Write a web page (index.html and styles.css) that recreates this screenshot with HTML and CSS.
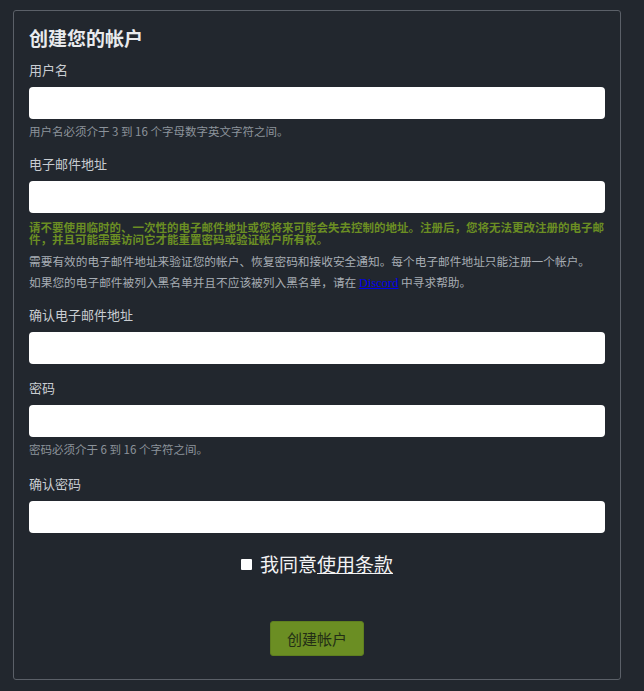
FILE: index.html
```html
<!DOCTYPE html>
<html lang="zh">
<head>
<meta charset="utf-8">
<title>创建您的帐户</title>
<link rel="stylesheet" href="styles.css">
</head>
<body>
<div class="card">
  <h1 class="title">创建您的帐户</h1>

  <div class="field f1">
    <label class="label">用户名</label>
    <input class="input" type="text">
    <p class="hint">用户名必须介于 3 到 16 个字母数字英文字符之间。</p>
  </div>

  <div class="field f2">
    <label class="label">电子邮件地址</label>
    <input class="input" type="email">
    <p class="warn">请不要使用临时的、一次性的电子邮件地址或您将来可能会失去控制的地址。注册后，您将无法更改注册的电子邮件，并且可能需要访问它才能重置密码或验证帐户所有权。</p>
    <p class="note n1">需要有效的电子邮件地址来验证您的帐户、恢复密码和接收安全通知。每个电子邮件地址只能注册一个帐户。</p>
    <p class="note n2">如果您的电子邮件被列入黑名单并且不应该被列入黑名单，请在 <a class="link" href="#">Discord</a> 中寻求帮助。</p>
  </div>

  <div class="field f3">
    <label class="label">确认电子邮件地址</label>
    <input class="input" type="email">
  </div>

  <div class="field f4">
    <label class="label">密码</label>
    <input class="input" type="password">
    <p class="hint">密码必须介于 6 到 16 个字符之间。</p>
  </div>

  <div class="field f5">
    <label class="label">确认密码</label>
    <input class="input" type="password">
  </div>

  <div class="agree">
    <span class="box"></span>
    <span class="agree-text">我同意<a class="terms" href="#">使用条款</a></span>
  </div>

  <div class="actions">
    <button class="btn" type="button">创建帐户</button>
  </div>
</div>
</body>
</html>
```

FILE: styles.css
```css
html, body {
  margin: 0;
  padding: 0;
  background: #22272e;
}
body {
  padding: 10px 0 0 13px;
  font-family: "Noto Sans CJK SC", "Noto Sans", sans-serif;
  color: #c9cdd2;
}
.card {
  box-sizing: border-box;
  width: 608px;
  border: 1px solid #5b6068;
  border-radius: 3px;
  padding: 14px 15px 23px 15px;
  background: #22272e;
}
.title {
  margin: 0;
  font-size: 19px;
  line-height: 25px;
  font-weight: 700;
  color: #e8eaed;
}
.field {
  display: flex;
  flex-direction: column;
}
.f1 { margin-top: 11px; }
.f2 { margin-top: 16px; }
.f3 { margin-top: 15px; }
.f4 { margin-top: 15px; }
.f5 { margin-top: 18px; }
.label {
  font-size: 13px;
  line-height: 18px;
  color: #c9cdd2;
  margin-bottom: 8px;
}
.input {
  box-sizing: border-box;
  height: 32px;
  width: 100%;
  margin: 0;
  border: none;
  border-radius: 4px;
  background: #ffffff;
}
.hint {
  margin: 4px 0 0 0;
  font-size: 11.5px;
  line-height: 16px;
  color: #8c939b;
}
.warn {
  margin: 8px 0 0 0;
  font-size: 11.5px;
  line-height: 12px;
  font-weight: 700;
  color: #6b8e23;
}
.note {
  margin: 0;
  font-size: 11.7px;
  line-height: 16px;
  color: #a7adb4;
}
.n1 { margin-top: 8px; }
.n2 { margin-top: 5px; }
.link {
  font-family: "Liberation Serif", serif;
  font-size: 12.5px;
  color: #0000ee;
  text-decoration: underline;
}
.agree {
  margin-top: 18px;
  display: flex;
  justify-content: center;
  align-items: center;
  gap: 8px;
  height: 26px;
}
.box {
  width: 11px;
  height: 11px;
  background: #ffffff;
  border-radius: 1px;
}
.agree-text {
  font-size: 19px;
  line-height: 26px;
  color: #f2f3f4;
}
.terms {
  color: #f2f3f4;
  text-decoration: underline;
}
.actions {
  margin-top: 44px;
  display: flex;
  justify-content: center;
}
.btn {
  height: 35px;
  padding: 0 16px;
  border: 1px solid #5f7f1f;
  border-radius: 3px;
  background: #6b8e23;
  color: #232e16;
  font-family: "Noto Sans CJK SC", "Noto Sans", sans-serif;
  font-size: 15px;
}
```
